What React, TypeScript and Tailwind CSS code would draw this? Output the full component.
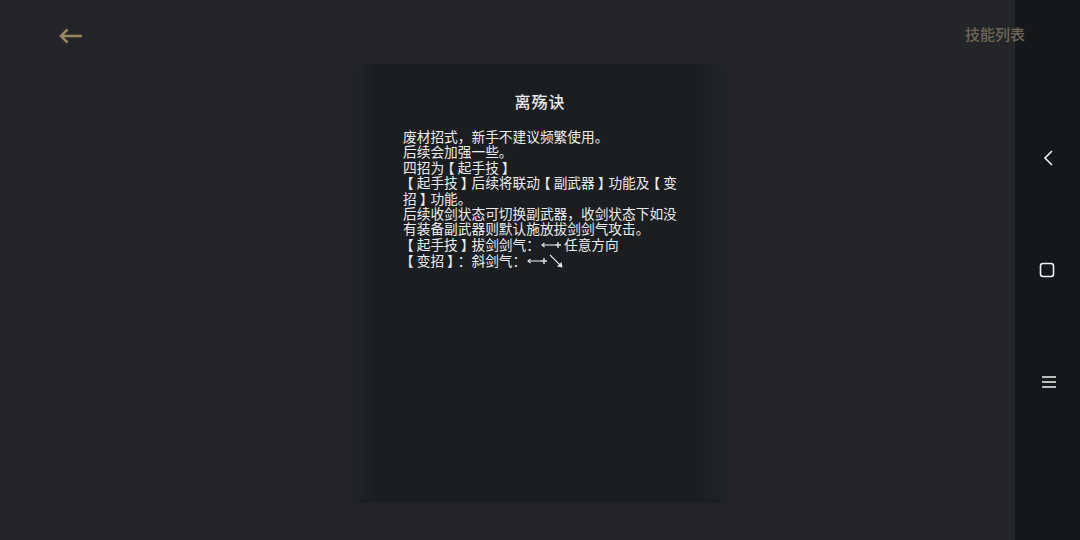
import React from "react";

const lines = [
  "废材招式，新手不建议频繁使用。",
  "后续会加强一些。",
  "四招为【起手技】",
  "【起手技】后续将联动【副武器】功能及【变招】功能。",
  "后续收剑状态可切换副武器，收剑状态下如没有装备副武器则默认施放拔剑剑气攻击。",
];

// in the original the brackets hug the outside of their box, leaving space inside
const Txt: React.FC<{ s: string }> = ({ s }) => (
  <>
    {s.split(/([【】])/).map((part, i) =>
      part === "【" ? (
        <span key={i} className="relative -left-[3px]">
          {part}
        </span>
      ) : part === "】" ? (
        <span key={i} className="relative left-[3px]">
          {part}
        </span>
      ) : (
        <React.Fragment key={i}>{part}</React.Fragment>
      )
    )}
  </>
);

const Arrow: React.FC<{ diag?: boolean }> = ({ diag }) => (
  <svg width={diag ? 38 : 24} height="16" viewBox={diag ? "0 0 38 16" : "0 0 24 16"} className="inline-block align-[-3px]">
    <path d="M2 8h13" stroke="#e5e5e5" strokeWidth="1.1" fill="none" />
    <path d="M4.5 6L2 8l2.5 2" stroke="#e5e5e5" strokeWidth="1.1" fill="none" />
    <path d="M15 8h6M18 5v6" stroke="#e5e5e5" strokeWidth="1.4" fill="none" />
    {diag && (
      <>
        <path d="M24 2l11 11" stroke="#e5e5e5" strokeWidth="1.1" fill="none" />
        <path d="M36.5 14.5l-5.5-1 4.5-4.5z" fill="#e5e5e5" />
      </>
    )}
  </svg>
);

export default function App() {
  return (
    <div className="relative h-[540px] w-[1080px] overflow-hidden bg-[#232529] font-['Noto_Sans_CJK_SC',sans-serif]">
      <header className="relative z-20 flex h-16 items-start justify-between pl-[58px] pr-[55px] pt-[24px]">
        <svg width="26" height="24" viewBox="0 0 26 24">
          <path d="M3 12h21" stroke="#978461" strokeWidth="2.6" />
          <path d="M9.5 5.5L3 12l6.5 6.5" stroke="#978461" strokeWidth="2.6" fill="none" />
        </svg>
        <span className="text-[15px] font-medium leading-5 text-[#6e6755]">技能列表</span>
      </header>

      <div className="flex justify-center">
        <section className="h-[436px] w-[370px] bg-[linear-gradient(to_right,#212428,#1b1e21_6%,#1b1e21_93%,#212428)] px-[48px] pt-[25px] shadow-[0_2px_4px_rgba(0,0,0,0.25)]">
          <h1 className="text-center text-[16px] font-medium leading-6 tracking-[1px] text-[#ececec]">离殇诀</h1>
          <div className="mt-[16px] w-[282px] text-[13.7px] leading-[15.4px] text-[#ededed] [text-spacing-trim:space-all]">
            {lines.map((l) => (
              <p key={l}>
                <Txt s={l} />
              </p>
            ))}
            <p>
              <Txt s="【起手技】拔剑剑气：" />
              <Arrow />任意方向
            </p>
            <p>
              <Txt s="【变招】：斜剑气：" />
              <Arrow diag />
            </p>
          </div>
        </section>
      </div>

      <nav className="absolute right-0 top-0 z-10 flex h-full w-[65px] flex-col items-center bg-[#15181b] pl-[2px] pt-[148px]">
        <svg width="20" height="20" viewBox="0 0 20 20">
          <path d="M13 3l-7 7 7 7" stroke="#f2f2f2" strokeWidth="1.6" fill="none" />
        </svg>
        <svg width="20" height="20" viewBox="0 0 20 20" className="mt-[92px] -ml-[3px]">
          <rect x="3.5" y="3.5" width="13" height="13" rx="2.5" stroke="#f2f2f2" strokeWidth="1.6" fill="none" />
        </svg>
        <svg width="20" height="20" viewBox="0 0 20 20" className="mt-[92px]">
          <path d="M3 5h14M3 10h14M3 15h14" stroke="#f2f2f2" strokeWidth="1.4" />
        </svg>
      </nav>
    </div>
  );
}
